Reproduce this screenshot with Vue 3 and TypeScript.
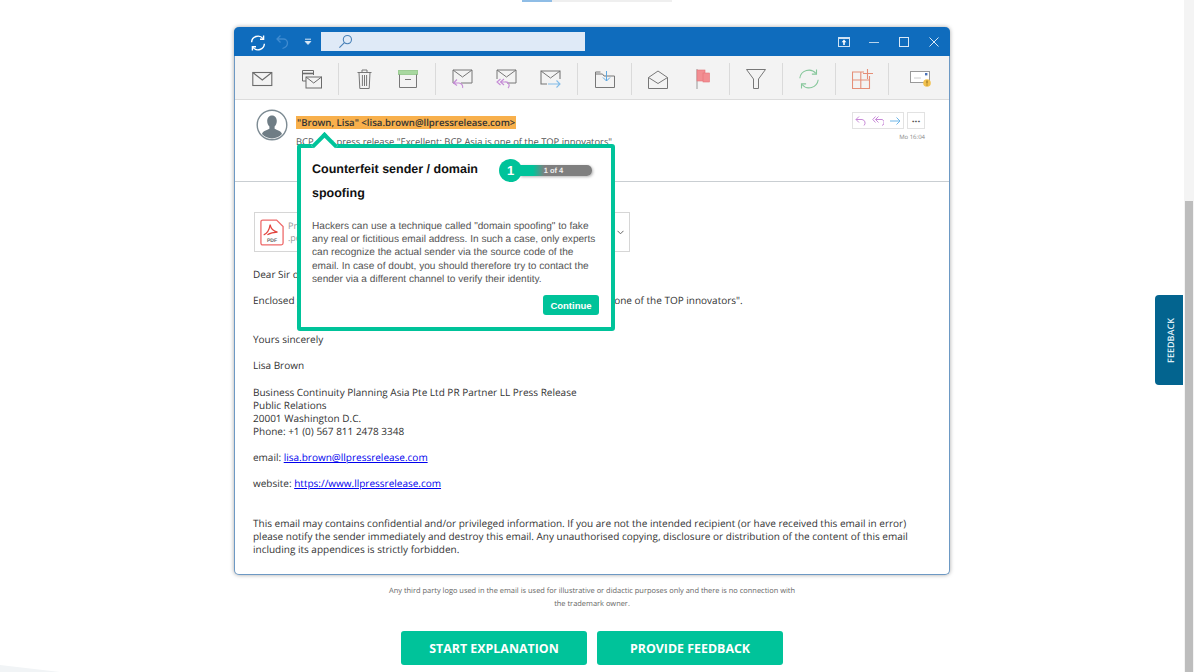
<script setup lang="ts">
// Phishing training page: mail window mock with a hint popover on the sender.
const bodyLines = [
  "Business Continuity Planning Asia Pte Ltd PR Partner LL Press Release",
  "Public Relations",
  "20001 Washington D.C.",
  "Phone: +1 (0) 567 811 2478 3348",
];
</script>

<template>
  <div class="page">
    <main class="content">
      <div class="progress"><span class="progress-on"></span></div>

      <section class="window">
        <header class="titlebar">
          <svg class="tb-icon sync" width="18" height="18" viewBox="0 0 18 18" fill="none" stroke="#fff" stroke-width="1.4">
            <path d="M2.6 8.2A6.4 6.4 0 0 1 14 4.6" />
            <path d="M15.4 9.8A6.4 6.4 0 0 1 4 13.4" />
            <path d="M14.6 1.6v3.6H11M3.4 16.4v-3.6H7" />
          </svg>
          <svg class="tb-icon undo" width="16" height="16" viewBox="0 0 16 16" fill="none" stroke="#3f8bd0" stroke-width="1.3">
            <path d="M5.5 1.5 2 5l3.5 3.5M2 5h6.5a4 4 0 0 1 4 4c0 2.5-2 4.5-5 5.5" />
          </svg>
          <svg class="tb-icon caret" width="8" height="8" viewBox="0 0 8 8" fill="none" stroke="#d8e8f6" stroke-width="1">
            <path d="M1 1.2h6" /><path d="M1.2 3.5 4 6.4l2.8-2.9z" fill="#d8e8f6" />
          </svg>
          <div class="search">
            <svg width="15" height="15" viewBox="0 0 15 15" fill="none" stroke="#4a82b8" stroke-width="1.1">
              <circle cx="9.4" cy="5.6" r="4.1" /><path d="M6.4 8.6 1.4 13.6" />
            </svg>
          </div>
          <div class="win-controls">
            <svg class="win-first" width="12" height="10" viewBox="0 0 12 10"><rect width="12" height="10" fill="#cfe2f3" /><rect x="1" y="2" width="10" height="7" fill="#0f6cbd" /><path d="M6 2.6 3.6 5.2h1.6V8h1.6V5.2h1.6z" fill="#fff" /></svg>
            <svg width="10" height="10" viewBox="0 0 10 10"><path d="M0 5.5h10" stroke="#b9d4ec" /></svg>
            <svg width="10" height="10" viewBox="0 0 10 10" fill="none"><rect x=".5" y=".5" width="9" height="9" stroke="#dbe9f6" /></svg>
            <svg width="10" height="10" viewBox="0 0 10 10" fill="none"><path d="M.5.5l9 9m0-9-9 9" stroke="#dbe9f6" /></svg>
          </div>
        </header>

        <nav class="toolbar">
          <div class="tool-group first">
            <svg width="22" height="16" viewBox="0 0 22 16" fill="none" stroke="#6b6b6b" stroke-width="1.1"><rect x=".8" y="1.5" width="19" height="13" /><path d="M.8 1.5 10.3 9l9.5-7.5" /></svg>
            <svg width="22" height="21" viewBox="0 0 22 21" fill="none" stroke="#6b6b6b" stroke-width="1"><path d="M9 12H1.5V1.5h11V6" /><path d="M1.5 4.5h11" stroke-width="1.6" /><rect x="5" y="8" width="15.5" height="11" fill="#f3f3f3" /><path d="m5 8 7.700 6 7.800-6" /></svg>
          </div>
          <div class="tool-group two">
            <svg width="15" height="20" viewBox="0 0 15 20" fill="none" stroke="#777" stroke-width="1"><path d="M.5 3.5h14M5 3.5V1h5v2.5M2 3.5l.8 16h9.400l.8-16M5.400 6v11M7.500 6v11M9.600 6v11" /></svg>
            <svg width="20" height="18" viewBox="0 0 20 18" fill="none" stroke="#777" stroke-width="1"><rect x=".5" y=".5" width="19" height="4" fill="#a8d8a0" stroke="#9ccc94" /><path d="M1.500 4.500v13h17v-13M7 9.500h6" /></svg>
          </div>
          <div class="tool-group three">
            <svg width="22" height="20" viewBox="0 0 22 20" fill="none"><path d="M3 14H1V1h19v13H9" stroke="#777" /><path d="m1 1 9.500 7L20 1" stroke="#777" /><path d="M5 10.500 1.500 14 5 16.500M1.500 14H7a4 4 0 0 1 3.600 5" stroke="#c58bd6" stroke-width="1.1" /></svg>
            <svg width="22" height="20" viewBox="0 0 22 20" fill="none"><path d="M1 10V1h19v13h-9" stroke="#777" /><path d="m1 1 9.500 7L20 1" stroke="#777" /><path d="M4.500 10 1 13l3.500 3M8 10l-3.500 3L8 16M4.500 13H9a3.500 3.500 0 0 1 3 6" stroke="#c58bd6" stroke-width="1.1" /></svg>
            <svg width="21" height="19" viewBox="0 0 21 19" fill="none"><path d="M7 14H1V1h19v8" stroke="#777" stroke-width="1.1" /><path d="m1 1 9.500 7L20 1" stroke="#777" /><path d="M8 14h12m-3.500-3.500L20 14l-3.500 3.500" stroke="#82bce8" stroke-width="1.1" /></svg>
          </div>
          <div class="tool-group one">
            <svg width="20" height="17" viewBox="0 0 20 17" fill="none"><path d="M.5 3h7L9 5h10.500v11.500H.5z" stroke="#777" /><path d="M.5 3V1h5" stroke="#777" /><path d="M11.500 0v10M8 6.500l3.500 3.500L15 6.500" stroke="#5fa8e0" /></svg>
          </div>
          <div class="tool-group two-b">
            <svg width="20" height="19" viewBox="0 0 20 19" fill="none" stroke="#777"><path d="M.5 7.500 10 1l9.500 6.500v11H.5z" /><path d="m.5 7.500 9.500 6 9.500-6" /></svg>
            <svg width="15" height="20" viewBox="0 0 15 20"><path d="M1 0v20" stroke="#999" /><rect x="1" y="1" width="8" height="11" fill="#f28e92" stroke="#e57378" stroke-width=".6" /><rect x="7" y="4" width="6.500" height="9" fill="#f28e92" stroke="#e57378" stroke-width=".6" /></svg>
          </div>
          <div class="tool-group one-b">
            <svg width="20" height="20" viewBox="0 0 20 20" fill="none" stroke="#777"><path d="M.5.5h19L12.500 10v9.500h-5V10z" /></svg>
          </div>
          <div class="tool-group one-b">
            <svg width="20" height="20" viewBox="0 0 20 20" fill="none" stroke="#86c79b" stroke-width="1.1"><path d="M.8 9.200A9.200 9.200 0 0 1 17 4.500M19.200 10.800A9.200 9.200 0 0 1 3 15.500" /><path d="M17.500.5v4.600h-4.600M2.500 19.500v-4.600h4.600" /></svg>
          </div>
          <div class="tool-group one-b">
            <svg width="21" height="20" viewBox="0 0 21 20" fill="none" stroke="#e58f78" stroke-width="1.1"><path d="M12 3H.5v16.500h17V7M.5 11h17M8.800 3v16.500M15.500 0v10M11 4.500h10" /></svg>
          </div>
          <div class="tool-group last">
            <svg width="21" height="18" viewBox="0 0 21 18"><rect x=".5" y="1.500" width="19" height="11" fill="#fff" stroke="#999" /><path d="M4 8h7" stroke="#ccc" /><rect x="15" y="3" width="2.400" height="2.400" fill="#4a72b8" /><circle cx="17" cy="13" r="3.800" fill="#f2c14e" /><path d="M17 10.500v3m0 1v1" stroke="#7a5a10" stroke-width=".9" /></svg>
          </div>
        </nav>

        <div class="mail-head">
          <svg class="avatar" width="32" height="32" viewBox="0 0 32 32">
            <circle cx="16" cy="16" r="14.800" fill="#fff" stroke="#7d8b93" stroke-width="1.400" />
            <path d="M16 6.500c3.200 0 4.800 2.600 4.800 5.600 0 2.400-1 4.400-2.200 5.400v2.200c1 1 6.400 1.600 7.400 5.400a13.800 13.800 0 0 1-20 0c1-3.800 6.400-4.400 7.400-5.400v-2.200c-1.200-1-2.200-3-2.200-5.400 0-3 1.600-5.600 4.800-5.600z" fill="#6f7d85" />
          </svg>
          <div class="mail-meta">
            <div class="sender"><mark>"Brown, Lisa" &lt;lisa.brown@llpressrelease.com&gt;</mark></div>
            <div class="subject">BCP Asia press release "Excellent: BCP Asia is one of the TOP innovators"</div>
          </div>
          <div class="mail-actions">
            <div class="action-row">
              <div class="action-box">
                <svg width="12" height="12" viewBox="0 0 12 12" fill="none" stroke="#c88ad8"><path d="M4 1.500 1 4.500l3 3M1 4.500h6a3.500 3.500 0 0 1 2 6" /></svg>
                <svg width="12" height="12" viewBox="0 0 12 12" fill="none" stroke="#c88ad8"><path d="M3.500 1.500.8 4.500l2.700 3M6.500 1.500l-3 3 3 3M3.500 4.500H8a3 3 0 0 1 2 6" /></svg>
                <svg width="12" height="12" viewBox="0 0 12 12" fill="none" stroke="#6eb6e8"><path d="M1 6h10M7.500 2.500 11 6l-3.500 3.500" /></svg>
              </div>
              <div class="action-more">···</div>
            </div>
            <time>Mo 16:04</time>
          </div>
        </div>

        <div class="mail-body">
          <div class="attachment">
            <svg width="24" height="29" viewBox="0 0 26 29" fill="none">
              <path d="M1 3a2 2 0 0 1 2-2h15l7 7v18a2 2 0 0 1-2 2H3a2 2 0 0 1-2-2z" stroke="#ee6a6a" stroke-width="1.400" fill="#fff" />
              <path d="M4 17c3-1 6-5 7-11 .6 4 3 7 8 8-4 0-8 1-11 3" stroke="#e2453f" stroke-width="1.300" />
              <text x="13" y="25" text-anchor="middle" class="pdf-label">PDF</text>
            </svg>
            <div class="file-text"><span>Press release</span><span>.pdf</span></div>
            <svg class="chev" width="7" height="5" viewBox="0 0 7 5" fill="none" stroke="#666"><path d="m.5.8 3 3 3-3" /></svg>
          </div>

          <p class="gap-b">Dear Sir or Madam,</p>
          <p class="gap-l">Enclosed you will find attached our latest press release "Excellent: BCP Asia is one of the TOP innovators".</p>
          <p class="gap-b">Yours sincerely</p>
          <p class="gap-b">Lisa Brown</p>
          <p class="gap-b"><template v-for="line in bodyLines" :key="line">{{ line }}<br /></template></p>
          <p class="gap-b">email: <a>lisa.brown@llpressrelease.com</a></p>
          <p class="gap-l">website: <a>https://www.llpressrelease.com</a></p>
          <p class="legal">This email may contains confidential and/or privileged information. If you are not the intended recipient (or have received this email in error) please notify the sender immediately and destroy this email. Any unauthorised copying, disclosure or distribution of the content of this email including its appendices is strictly forbidden.</p>
        </div>

        <aside class="hint">
          <span class="hint-arrow"></span>
          <div class="hint-top">
            <h2>Counterfeit sender / domain spoofing</h2>
            <div class="step">
              <span class="step-num">1</span>
              <span class="step-bar">1 of 4</span>
            </div>
          </div>
          <p>Hackers can use a technique called "domain spoofing" to fake any real or fictitious email address. In such a case, only experts can recognize the actual sender via the source code of the email. In case of doubt, you should therefore try to contact the sender via a different channel to verify their identity.</p>
          <button class="continue">Continue</button>
        </aside>
      </section>

      <p class="disclaimer">Any third party logo used in the email is used for illustrative or didactic purposes only and there is no connection with the trademark owner.</p>

      <div class="cta-row">
        <button class="cta">START EXPLANATION</button>
        <button class="cta">PROVIDE FEEDBACK</button>
      </div>

      <div class="feedback-tab"><span>FEEDBACK</span></div>
      <div class="corner"></div>
    </main>

    <div class="scrollbar"><div class="scroll-thumb"></div></div>
  </div>
</template>

<style>
html, body { margin: 0; overflow: hidden; background: #fff; }
</style>

<style scoped>
.page {
  display: flex;
  width: 1194px;
  height: 672px;
  overflow: hidden;
  font-family: "Open Sans", sans-serif;
  text-rendering: geometricPrecision;
}
.content {
  position: relative;
  flex: 1;
  display: flex;
  flex-direction: column;
  align-items: center;
}
.progress {
  position: absolute;
  top: 0;
  left: 522px;
  width: 150px;
  height: 2px;
  background: #efefef;
}
.progress-on {
  display: block;
  width: 30px;
  height: 2px;
  background: #8fbde6;
}
.scrollbar {
  width: 10px;
  flex-shrink: 0;
  box-sizing: border-box;
  background: #f4f4f4;
  padding: 201px 1px 0;
}
.scroll-thumb { height: 471px; background: #bdbdbd; }

.window {
  position: relative;
  width: 716px;
  height: 548px;
  margin-top: 27px;
  box-sizing: border-box;
  border: 1px solid #6d99c4;
  border-top: 0;
  border-radius: 5px;
  box-shadow: 0 0 4px rgba(0, 0, 0, .35);
  background: #fff;
}
.titlebar {
  display: flex;
  align-items: center;
  height: 29px;
  margin: 0 -1px;
  padding-left: 15px;
  background: #0f6cbd;
  border-radius: 5px 5px 0 0;
}
.tb-icon { flex-shrink: 0; }
.sync { margin-top: 2px; }
.undo { margin-left: 8px; }
.caret { margin-left: 13px; }
.search {
  display: flex;
  align-items: center;
  width: 264px;
  height: 19px;
  margin-left: 9px;
  padding-left: 17px;
  box-sizing: border-box;
  background: #dfeaf7;
}
.win-controls {
  display: flex;
  align-items: center;
  gap: 20px;
  margin-left: auto;
  padding-right: 11px;
}
.win-first { margin-right: -1px; }
.toolbar {
  display: flex;
  height: 44px;
  background: #f3f3f3;
  border-bottom: 1px solid #dcdcdc;
  box-sizing: border-box;
}
.tool-group {
  display: flex;
  align-items: center;
  height: 32px;
  margin-top: 7px;
  border-right: 1px solid #dadada;
  box-sizing: border-box;
}
.tool-group.first { width: 104px; padding-left: 17px; gap: 27px; }
.tool-group.two { width: 97px; padding-left: 18px; gap: 26px; }
.tool-group.three { width: 142px; padding-left: 16px; gap: 22px; }
.tool-group.one { width: 54px; padding-left: 17px; }
.tool-group.two-b { width: 98px; padding-left: 16px; gap: 28px; }
.tool-group.one-b { width: 53px; padding-left: 16px; }
.tool-group.last { border-right: 0; padding-left: 21px; }

.mail-head {
  display: flex;
  height: 82px;
  box-sizing: border-box;
  padding: 9px 24px 0 21px;
  border-bottom: 1px solid #c9ced2;
}
.avatar { flex-shrink: 0; }
.mail-meta { margin-left: 8px; flex: 1; }
.sender {
  font-size: 9.6px;
  font-weight: 600;
  line-height: 13px;
  margin-top: 7px;
  color: #333;
}
.sender mark { background: #f8b04c; color: #333; padding: 0 1px; }
.subject {
  font-size: 9.4px;
  line-height: 13px;
  margin-top: 6px;
  color: #555;
}
.mail-actions {
  display: flex;
  flex-direction: column;
  align-items: flex-end;
  width: 74px;
}
.action-row { display: flex; gap: 3px; margin-top: 3px; }
.action-box, .action-more {
  display: flex;
  align-items: center;
  justify-content: space-around;
  height: 17px;
  box-sizing: border-box;
  border: 1px solid #e2e2e2;
}
.action-box { width: 52px; }
.action-more { width: 18px; font-size: 10px; font-weight: 700; color: #555; }
time { font-size: 6px; line-height: 9px; margin-top: 4px; color: #888; }

.mail-body {
  padding: 30px 0 0 18px;
  font-size: 10px;
  line-height: 13.15px;
  color: #333;
}
.mail-body p { margin: 0; }
.gap-b { margin-bottom: 13px !important; }
.gap-l { margin-bottom: 26px !important; }
.legal { width: 665px; }
.mail-body a { color: #0000ee; text-decoration: underline; }
.attachment {
  display: flex;
  align-items: center;
  width: 376px;
  height: 40px;
  margin: 0 0 16px 1px;
  box-sizing: border-box;
  padding: 0 5px 0 5px;
  border: 1px solid #d6d6d6;
}
.pdf-label { font: 700 5.5px "Liberation Sans", sans-serif; fill: #666; }
.file-text {
  display: flex;
  flex-direction: column;
  margin-left: 4px;
  font-size: 9px;
  line-height: 12px;
  color: #999;
}
.chev { margin-left: auto; }

.hint {
  position: absolute;
  top: 117px;
  left: 62px;
  width: 318px;
  height: 187px;
  box-sizing: border-box;
  padding: 9px 12px 0 11px;
  background: #fff;
  border: 4px solid #00c39a;
  border-radius: 3px;
  font-family: "Liberation Sans", sans-serif;
}
.hint-arrow {
  position: absolute;
  top: -12px;
  left: 14px;
  width: 15px;
  height: 15px;
  background: #fff;
  border: 4px solid #00c39a;
  border-right: 0;
  border-bottom: 0;
  transform: rotate(45deg);
}
.hint-top { display: flex; align-items: flex-start; justify-content: space-between; }
.hint h2 {
  width: 180px;
  margin: 0;
  font-size: 12.5px;
  font-weight: 700;
  line-height: 24px;
  color: #111;
}
.step { display: flex; align-items: center; margin: 2px 7px 0 0; }
.step-num {
  position: relative;
  width: 23px;
  height: 23px;
  border-radius: 50%;
  background: #00c39a;
  color: #fff;
  font-size: 13px;
  font-weight: 700;
  line-height: 23px;
  text-align: center;
}
.step-bar {
  width: 72px;
  height: 11px;
  margin-left: -2px;
  padding-right: 5px;
  box-sizing: border-box;
  border-radius: 0 5px 5px 0;
  background: linear-gradient(90deg, #00c39a 0, #00c39a 18%, #7f7f7f 34%);
  box-shadow: 1px 1px 3px rgba(0, 0, 0, .3);
  color: #eee;
  font-size: 7.5px;
  font-weight: 700;
  line-height: 11px;
  text-align: center;
}
.hint p {
  margin: 15px 0 0;
  font-size: 10.1px;
  line-height: 13.2px;
  color: #555;
}
.continue {
  position: absolute;
  right: 12px;
  bottom: 12px;
  width: 56px;
  height: 20px;
  padding: 0;
  border: 0;
  border-radius: 3px;
  background: #00c39a;
  color: #fff;
  font-family: inherit;
  font-size: 9.5px;
  font-weight: 700;
}
.disclaimer {
  width: 412px;
  margin: 10px 0 0;
  font-size: 7.45px;
  line-height: 12.5px;
  text-align: center;
  color: #666;
}
.cta-row { display: flex; gap: 10px; margin-top: 21px; }
.cta {
  width: 186px;
  height: 34px;
  padding: 0;
  border: 0;
  border-radius: 3px;
  background: #00c39a;
  color: #fff;
  font-family: "Open Sans", sans-serif;
  font-size: 12.4px;
  font-weight: 700;
}
.feedback-tab {
  position: absolute;
  top: 295px;
  right: 1px;
  display: flex;
  align-items: center;
  justify-content: center;
  width: 28px;
  height: 90px;
  padding-left: 3px;
  box-sizing: border-box;
  border-radius: 4px 0 0 4px;
  background: #03648f;
  color: #dfeef5;
  font-size: 9px;
  font-weight: 600;
}
.feedback-tab span { transform: rotate(-90deg); white-space: nowrap; }
.corner {
  position: absolute;
  left: 0;
  bottom: 0;
  width: 0;
  height: 0;
  border-left: 60px solid transparent;
  border-bottom: 7px solid #f1f4f6;
  transform: scaleX(-1);
}
</style>
